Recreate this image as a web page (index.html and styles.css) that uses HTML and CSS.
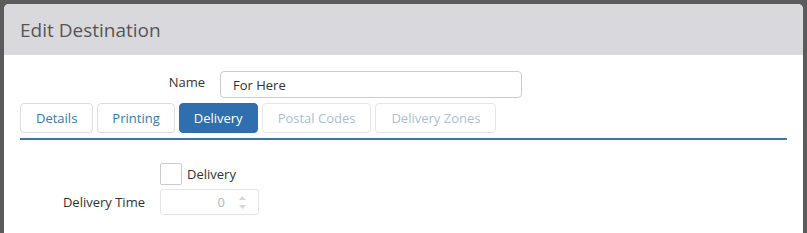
FILE: index.html
```html
<!DOCTYPE html>
<html lang="en">
<head>
  <meta charset="UTF-8">
  <title>Edit Destination</title>
  <link rel="stylesheet" href="styles.css">
</head>
<body>
  <div class="modal">
    <div class="modal-header">Edit Destination</div>
    <div class="modal-body">
      <div class="name-row">
        <label class="name-label">Name</label>
        <input class="name-input" type="text" value="For Here">
      </div>

      <!-- tabs -->
      <div class="tabs">
        <span class="tab">Details</span>
        <span class="tab">Printing</span>
        <span class="tab active">Delivery</span>
        <span class="tab disabled">Postal Codes</span>
        <span class="tab disabled">Delivery Zones</span>
      </div>

      <div class="tab-pane">
        <div class="row">
          <span class="row-label"></span>
          <span class="check"></span>
          <span class="check-text">Delivery</span>
        </div>
        <div class="row">
          <span class="row-label">Delivery Time</span>
          <div class="number">
            <span class="number-value">0</span>
            <span class="spin">
              <svg width="7" height="4" viewBox="0 0 7 4"><path d="M0 4 L3.5 0 L7 4Z" fill="#d6d6d6"/></svg>
              <svg width="7" height="4" viewBox="0 0 7 4"><path d="M0 0 L3.5 4 L7 0Z" fill="#d6d6d6"/></svg>
            </span>
          </div>
        </div>
      </div>
    </div>
  </div>
</body>
</html>
```

FILE: styles.css
```css
body{
  margin:0;
  background:#5b5b5b;
  font-family:"Open Sans", sans-serif;
  font-size:13px;
  color:#333;
}
.modal{
  margin:4px 0 0 4px;
  width:799px;
  height:240px;
  background:#fff;
  border-radius:5px 5px 0 0;
  overflow:hidden;
}
.modal-header{
  height:51px;
  box-sizing:border-box;
  padding:13px 0 0 16px;
  background:#d9d9dd;
  color:#555;
  font-size:19px;
}
.modal-body{padding:16px 16px 0 16px;}
.name-row{
  display:flex;
  align-items:center;
  height:27px;
}
.name-label{
  width:200px;
  text-align:right;
  padding-right:15px;
  box-sizing:border-box;
  margin-top:-5px;
}
.name-input{
  width:302px;
  height:27px;
  box-sizing:border-box;
  border:1px solid #ccc;
  border-radius:4px;
  padding:0 12px;
  font:inherit;
  color:#333;
}
.tabs{
  display:flex;
  gap:4px;
  margin-top:5px;
  padding-bottom:5px;
  border-bottom:2px solid #3a73a8;
}
.tab{
  height:30px;
  box-sizing:border-box;
  border:1px solid #ddd;
  border-radius:4px;
  padding:0 15px;
  display:flex;
  align-items:center;
  color:#337ab7;
}
.tab:nth-child(2), .tab:nth-child(3){padding:0 14px;}
.tab.active{background:#2f6fad;border-color:#2f6fad;color:#fff;}
.tab.disabled{color:#a9bfd2;border-color:#e6e6e6;}
.tab-pane{padding-top:23px;}
.row{
  display:flex;
  align-items:center;
  margin-bottom:4px;
}
.row-label{
  width:140px;
  text-align:right;
  padding-right:15px;
  box-sizing:border-box;
}
.check{
  width:22px;
  height:22px;
  box-sizing:border-box;
  border:1px solid #ccc;
  border-radius:2px;
}
.check-text{margin-left:5px;}
.number{
  width:99px;
  height:26px;
  box-sizing:border-box;
  border:1px solid #e5e5e5;
  border-radius:3px;
  display:flex;
  align-items:center;
  justify-content:flex-end;
  color:#b5b5b5;
}
.number-value{margin-right:14px;}
.spin{
  display:flex;
  flex-direction:column;
  gap:5px;
  margin-right:12px;
}
.spin svg{display:block;}
```
